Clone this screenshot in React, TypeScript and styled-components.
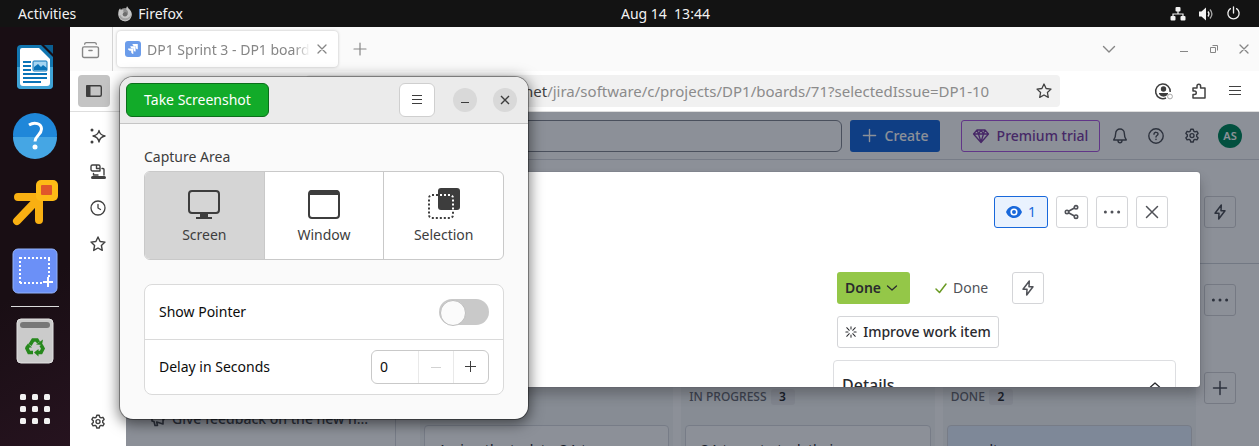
import React from "react";
import styled, { createGlobalStyle, css } from "styled-components";

const Global = createGlobalStyle`
  * { box-sizing: border-box; }
  body { margin: 0; font-family: "Noto Sans", "Open Sans", sans-serif; font-size: 14px; }
  button, input { font: inherit; color: inherit; margin: 0; padding: 0; }
  button { background: none; border: 0; cursor: pointer; white-space: nowrap; }
  svg { display: block; flex: none; overflow: visible; }
`;

/* ---------- desktop shell ---------- */

const Desktop = styled.div`
  position: relative;
  display: flex;
  flex-direction: column;
  height: 100vh;
  overflow: hidden;
  background: #1b0f16;
`;

const TopBar = styled.header`
  display: grid;
  grid-template-columns: 604fr auto 532fr;
  align-items: center;
  flex: none;
  height: 27px;
  padding: 0 18px;
  background: #131313;
  color: #f2f2f2;
  line-height: 20px;
`;

const TopGroup = styled.div<{ $end?: boolean; $gap: number }>`
  display: flex;
  align-items: center;
  justify-content: ${(p) => (p.$end ? "flex-end" : "flex-start")};
  gap: ${(p) => p.$gap}px;
`;

const TopButton = styled.button`
  display: flex;
  align-items: center;
  gap: 5px;
`;

const Clock = styled.time`
  white-space: pre;
`;

const Body = styled.div`
  display: flex;
  flex: 1;
  min-height: 0;
`;

const Dock = styled.nav`
  display: flex;
  flex-direction: column;
  align-items: center;
  flex: none;
  width: 70px;
  padding-top: 6px;
  background: linear-gradient(150deg, #190e14 60%, #26131f);
`;

const DockItem = styled.button`
  display: grid;
  place-items: center;
  flex: none;
  width: 70px;
  height: 68px;
`;

const DockRule = styled.hr`
  flex: none;
  width: 48px;
  height: 1px;
  margin: 1px 0 0;
  border: 0;
  background: #dcdcdc;
`;

/* ---------- browser ---------- */

const Browser = styled.main`
  display: flex;
  flex-direction: column;
  flex: 1;
  min-width: 0;
  background: #fff;
  color: #414141;
`;

const IconButton = styled.button<{ $w?: number; $active?: boolean }>`
  display: grid;
  place-items: center;
  flex: none;
  width: ${(p) => p.$w ?? 32}px;
  height: 32px;
  border-radius: 4px;
  background: ${(p) => (p.$active ? "#c4c4c4" : "none")};
`;

const TabBar = styled.div`
  display: flex;
  align-items: center;
  flex: none;
  height: 44px;
  background: #fafafa;
  color: #868686;
`;

const TabListCell = styled.div`
  display: flex;
  justify-content: center;
  align-items: center;
  width: 43px;
  height: 44px;
  padding-right: 2px;
  border-right: 1px solid #d4d4d4;
`;

const Tab = styled.div`
  display: flex;
  align-items: center;
  width: 221px;
  height: 36px;
  margin: 0 6px 0 4px;
  padding: 0 4px 0 8px;
  border-radius: 4px;
  background: #fff;
  box-shadow: 0 0 3px rgba(0, 0, 0, 0.25);
`;

const TabTitle = styled.span`
  flex: 1;
  overflow: hidden;
  margin-left: 6px;
  white-space: nowrap;
  mask-image: linear-gradient(to left, transparent, #000 16px);
`;

const TabClose = styled(IconButton)`
  width: 24px;
`;

const WindowControls = styled.div`
  display: flex;
  align-items: center;
  margin-left: auto;
`;

const AllTabsButton = styled(IconButton)`
  margin-right: 44px;
`;

const Toolbar = styled.div`
  display: flex;
  align-items: center;
  flex: none;
  height: 41px;
  padding: 0 8px;
  border-bottom: 1px solid #dedede;
`;

const UrlBar = styled.form`
  display: flex;
  align-items: center;
  flex: 1;
  height: 32px;
  margin: 0 87px 0 196px;
  padding-left: 218px;
  border-radius: 4px;
  background: #f1f1f1;
  font-size: 15px;
`;

const UrlInput = styled.input`
  flex: 1;
  min-width: 0;
  border: 0;
  outline: 0;
  background: none;
  color: #8b8b8b;
`;

const ToolbarActions = styled.div`
  display: flex;
  gap: 4px;
`;

const BrowserBody = styled.div`
  display: flex;
  flex: 1;
  min-height: 0;
`;

const SideStrip = styled.nav`
  display: flex;
  flex-direction: column;
  flex: none;
  width: 56px;
  padding: 8px 12px;
  gap: 4px;
`;

const Spacer = styled.div`
  flex: 1;
`;

/* ---------- board page ---------- */

const Page = styled.section`
  position: relative;
  display: flex;
  flex-direction: column;
  flex: 1;
  min-width: 0;
  overflow: hidden;
  background: #fff;
  color: #292a2e;
  line-height: 20px;
`;

const PageHeader = styled.header`
  display: flex;
  align-items: center;
  flex: none;
  height: 48px;
  padding-right: 17px;
  border-bottom: 1px solid #d9dbdf;
  color: #505258;
`;

const SearchBox = styled.input`
  flex: 1;
  height: 32px;
  margin: 0 8px 0 160px;
  border: 1px solid #858993;
  border-radius: 6px;
  background: none;
`;

const HeaderButton = styled.button<{ $primary?: boolean }>`
  display: flex;
  align-items: center;
  justify-content: center;
  gap: 8px;
  flex: none;
  width: ${(p) => (p.$primary ? 90 : 139)}px;
  height: 32px;
  border-radius: 3px;
  font-weight: 500;
  ${(p) =>
    p.$primary
      ? css`
          margin-right: 21px;
          background: #1868db;
          color: #fff;
        `
      : css`
          margin-right: 2px;
          border: 1px solid #af59e1;
          color: #803fa5;
        `}
`;

const Avatar = styled.span`
  display: grid;
  place-items: center;
  width: 24px;
  height: 24px;
  margin-left: 8px;
  border-radius: 50%;
  background: #008a5c;
  color: #fff;
  font-size: 11px;
  font-weight: 600;
`;

const HeaderIcon = styled(IconButton)`
  width: 36px;
`;

const PageBody = styled.div`
  display: flex;
  flex: 1;
  min-height: 0;
`;

const PageNav = styled.nav`
  display: flex;
  flex-direction: column;
  justify-content: flex-end;
  flex: none;
  width: 270px;
  padding: 0 24px 17px;
  border-right: 1px solid #d9dbdf;
`;

const FeedbackLink = styled.a`
  display: flex;
  align-items: center;
  gap: 6px;
  color: #505258;
  font-weight: 500;
  text-decoration: none;
  white-space: nowrap;
`;

const BoardArea = styled.div`
  display: flex;
  flex-direction: column;
  flex: 1;
  min-width: 0;
`;

const BoardBar = styled.div<{ $tall?: boolean }>`
  display: flex;
  justify-content: flex-end;
  flex: none;
  height: ${(p) => (p.$tall ? 104 : 108)}px;
  padding: ${(p) => (p.$tall ? 36 : 20)}px 23px 0;
  border-bottom: ${(p) => (p.$tall ? "1px solid #d0d3d8" : "0")};
`;

const OutlineButton = styled.button<{ $w?: number; $selected?: boolean }>`
  display: flex;
  align-items: center;
  justify-content: center;
  gap: 6px;
  flex: none;
  width: ${(p) => p.$w ?? 32}px;
  height: 32px;
  border: 1px solid ${(p) => (p.$selected ? "#1868db" : "#d4d5d8")};
  border-radius: 3px;
  background: ${(p) => (p.$selected ? "#e9f2fe" : "none")};
  color: ${(p) => (p.$selected ? "#1868db" : "#505258")};
`;

const Columns = styled.div`
  display: flex;
  flex: 1;
  gap: 8px;
  min-height: 0;
  padding: 0 23px 0 24px;
`;

const Column = styled.section`
  flex: 1;
  min-width: 0;
  padding: 14px 4px 0;
  background: #f6f7f8;
`;

const ColumnTitle = styled.h3`
  display: flex;
  align-items: center;
  gap: 4px;
  height: 21px;
  margin: 0 0 18px;
  padding-left: 4px;
  color: #6b6e76;
  font-size: 12px;
  font-weight: 500;
`;

const Count = styled.span`
  width: 24px;
  border-radius: 3px;
  background: #eaebec;
  color: #292a2e;
  font-weight: 600;
  line-height: 16px;
  text-align: center;
`;

const Card = styled.article<{ $selected?: boolean }>`
  height: 90px;
  padding: 14px 13px;
  border: 1px solid #d9dbdf;
  border-radius: 4px;
  background: ${(p) => (p.$selected ? "#e6f0ff" : "#fff")};
`;

const Blanket = styled.div`
  position: absolute;
  inset: 0;
  background: rgba(5, 12, 31, 0.46);
`;

const IssueDialog = styled.section`
  position: absolute;
  inset: 60px 59px 59px;
  display: flex;
  flex-direction: column;
  align-items: flex-end;
  overflow: hidden;
  padding: 24px 24px 0;
  border-radius: 3px;
  background: #fff;
  box-shadow: 0 8px 12px rgba(30, 31, 33, 0.3), 0 0 1px rgba(30, 31, 33, 0.6);
`;

const IssueActions = styled.div`
  display: flex;
  gap: 8px;
  margin: 0 8px 44px 0;
`;

const IssueSide = styled.div`
  display: flex;
  flex-direction: column;
  gap: 12px;
  width: 343px;
`;

const StatusRow = styled.div`
  display: flex;
  align-items: center;
  padding-left: 4px;
`;

const StatusButton = styled.button`
  display: flex;
  align-items: center;
  justify-content: space-between;
  width: 73px;
  height: 32px;
  margin-right: 25px;
  padding: 0 12px 0 8px;
  border-radius: 3px;
  background: #94c748;
  color: #292a2e;
  font-weight: 600;
`;

const Resolution = styled.span`
  display: flex;
  align-items: center;
  gap: 6px;
  width: 77px;
  color: #505258;
`;

const DoneMark = styled.span`
  color: #6a9a23;
`;

const ImproveButton = styled(OutlineButton)`
  margin-left: 4px;
  color: #292a2e;
  font-weight: 500;
`;

const Details = styled.section`
  display: flex;
  justify-content: space-between;
  align-items: center;
  flex: none;
  height: 50px;
  padding: 0 14px 0 8px;
  border: 1px solid #dddee1;
  border-radius: 4px;
`;

const DetailsTitle = styled.h2`
  margin: 0;
  font-size: 16px;
  font-weight: 500;
`;

/* ---------- screenshot tool ---------- */

const ToolWindow = styled.section`
  position: absolute;
  top: 77px;
  left: 120px;
  width: 408px;
  overflow: hidden;
  border-radius: 13px;
  background: #fafafa;
  color: #3d3d3d;
  line-height: 20px;
  box-shadow: 0 0 0 1px rgba(0, 0, 0, 0.35), 0 3px 14px 2px rgba(0, 0, 0, 0.5);
`;

const ToolHeader = styled.header`
  display: flex;
  align-items: center;
  height: 47px;
  padding: 0 11px 0 6px;
  border-bottom: 1px solid #c5c5c5;
  background: #ebebeb;
`;

const TakeButton = styled.button`
  width: 143px;
  height: 34px;
  margin-right: auto;
  border: 1px solid #0b6e1a;
  border-radius: 6px;
  background: #12ab29;
  color: #fff;
`;

const MenuButton = styled.button`
  display: grid;
  place-items: center;
  width: 36px;
  height: 34px;
  margin-right: 18px;
  border: 1px solid #cfcfcf;
  border-radius: 6px;
  background: #fff;
`;

const RoundButton = styled.button`
  display: grid;
  place-items: center;
  width: 24px;
  height: 24px;
  border-radius: 50%;
  background: #d9d9d9;
  & + & { margin-left: 16px; }
`;

const ToolBody = styled.div`
  padding: 23px 24px 24px;
`;

const AreaGroup = styled.fieldset`
  min-width: 0;
  margin: 0 0 24px;
  padding: 0;
  border: 0;
`;

const AreaLegend = styled.legend`
  padding: 0 0 4px;
`;

const AreaOptions = styled.div`
  display: flex;
  overflow: hidden;
  height: 89px;
  border: 1px solid #c9c9c9;
  border-radius: 6px;
  background: #fff;
`;

const HiddenInput = styled.input`
  position: absolute;
  opacity: 0;
  pointer-events: none;
`;

const AreaOption = styled.label`
  display: flex;
  flex: 1;
  flex-direction: column;
  align-items: center;
  justify-content: center;
  gap: 4px;
  padding-top: 2px;
  & + & { border-left: 1px solid #c9c9c9; }
  &:has(input:checked) { background: #d5d5d5; }
`;

const SettingsList = styled.div`
  border: 1px solid #dadada;
  border-radius: 8px;
  background: #fff;
  color: #0c0c0c;
`;

const Setting = styled.div`
  display: flex;
  align-items: center;
  justify-content: space-between;
  height: 54px;
  padding: 0 14px;
  & + & { height: 55px; border-top: 1px solid #dadada; }
`;

const Switch = styled.input`
  appearance: none;
  display: flex;
  width: 50px;
  height: 26px;
  padding: 1px;
  border-radius: 13px;
  background: #c9c9c9;
  &::before {
    content: "";
    width: 24px;
    height: 24px;
    border: 1px solid #bebebe;
    border-radius: 50%;
    background: #fbfbfb;
  }
  &:checked { justify-content: flex-end; background: #12ab29; }
`;

const Spin = styled.div`
  display: flex;
  overflow: hidden;
  width: 118px;
  height: 34px;
  border: 1px solid #c9c9c9;
  border-radius: 6px;
`;

const SpinInput = styled.input`
  flex: 1;
  min-width: 0;
  padding-left: 8px;
  border: 0;
  outline: 0;
  background: none;
`;

const SpinButton = styled.button`
  display: grid;
  place-items: center;
  width: 35px;
  border-left: 1px solid #e9e9e9;
  color: #3d3d3d;
  &:disabled { color: #d2d2d2; }
`;

/* ---------- icons ---------- */

type LineProps = { d: string; size?: number; box?: number; w?: number; round?: boolean; children?: React.ReactNode };

const Line = ({ d, size = 16, box = 16, w = 1.3, round = true, children }: LineProps) => (
  <svg width={size} height={size} viewBox={`0 0 ${box} ${box}`} fill="none" stroke="currentColor" strokeWidth={w}
    strokeLinecap={round ? "round" : "butt"} strokeLinejoin={round ? "round" : "miter"} aria-hidden>
    <path d={d} />
    {children}
  </svg>
);

const STAR = "M8 1l2.1 4.5 4.9.6-3.6 3.4.9 4.9L8 12l-4.3 2.4.9-4.9L1 6.1l4.9-.6z";
const BOLT = "M9.3 1L3 9.2h4L6.7 15 13 6.8H9z";
const GEAR =
  "M6.8 1.2h2.4l.5 1.9 1.3.8 1.9-.6 1.2 2.1-1.4 1.4v1.6l1.4 1.4-1.2 2.1-1.9-.6-1.3.8-.5 1.9H6.8l-.5-1.9-1.3-.8-1.9.6-1.2-2.1 1.4-1.4V6.8L1.9 5.4l1.2-2.1 1.9.6 1.3-.8z";
const CROSS_SMALL = "M4 4l8 8M12 4l-8 8";

const Gear = () => (
  <Line d={GEAR} w={1.4}><circle cx="8" cy="7.6" r="2" /></Line>
);

const Dots = () => (
  <svg width="18" height="4" viewBox="0 0 18 4" fill="currentColor" aria-hidden>
    <circle cx="2.4" cy="2" r="1.5" /><circle cx="9" cy="2" r="1.5" /><circle cx="15.6" cy="2" r="1.5" />
  </svg>
);

const FirefoxIcon = () => (
  <svg width="16" height="16" viewBox="0 0 16 16" aria-hidden>
    <circle cx="8" cy="8.6" r="6.6" fill="#8d8d8d" />
    <path d="M1.4 8.6C1 5.500 2 3.300 3.200 2.300c.1 1 .5 1.500 1 1.900C5 3.600 6.300 3.600 7 4c-.6.4-1.300.8-1.200 1.600l2 .4c-.1 1-1.800 1.100-2 2.100 0 2 3.500 2.400 5 .2 1-2-.2-4-1.600-4.900 0-1.300.3-2.400 1-3.100.5 2.300 4.600 3.700 4.500 8.100-.2 4-3.200 6.800-6.800 6.800s-6.300-2.800-6.500-6.600z" fill="#c6c6c6" />
    <path d="M2 10c1 3 3.400 4.600 6.400 4.400 3-.2 5.500-2.400 5.700-5.600-1.400 2.600-3.500 3.600-6 3.400C5.500 12 4 11 3.500 9z" fill="#a4a4a4" />
    <circle cx="8" cy="8.200" r="2.200" fill="#6d6d6d" />
  </svg>
);

const NetworkIcon = () => (
  <svg width="16" height="14" viewBox="0 0 16 14" fill="#f2f2f2" aria-hidden>
    <rect x="5.500" y="0" width="5" height="4.500" rx="1" />
    <rect x="0.500" y="9" width="5" height="4.500" rx="1" />
    <rect x="10.500" y="9" width="5" height="4.500" rx="1" />
    <path d="M8 4v3M3 9V7h10v2" fill="none" stroke="#f2f2f2" strokeWidth="1.200" />
  </svg>
);

const VolumeIcon = () => (
  <svg width="16" height="16" viewBox="0 0 16 16" aria-hidden>
    <path d="M1 5.500h2.500L8 1.500v13L3.500 10.500H1z" fill="#f2f2f2" />
    <path d="M10 5.500q2 2.500 0 5" fill="none" stroke="#f2f2f2" strokeWidth="1.300" />
    <path d="M12 3.500q3.800 4.500 0 9" fill="none" stroke="#a8a8a8" strokeWidth="1.300" />
  </svg>
);

const WriterIcon = () => (
  <svg width="38" height="46" viewBox="0 0 38 46" aria-hidden>
    <path d="M5 1h20l12 12v28a4 4 0 0 1-4 4H5a4 4 0 0 1-4-4V5a4 4 0 0 1 4-4z" fill="#1276b0" />
    <path d="M1 23h36v18a4 4 0 0 1-4 4H5a4 4 0 0 1-4-4z" fill="#3fa3d6" />
    <path d="M28 1h9v9z" fill="#0b5f92" />
    <path d="M6 4h17l11 11v24a3 3 0 0 1-3 3H7a3 3 0 0 1-3-3V6a2 2 0 0 1 2-2z" fill="#fff" />
    <path d="M7 18h8M7 22h8M7 26h8M7 30h24M7 34h24M7 38h18" stroke="#0b74b8" strokeWidth="2" />
    <rect x="17" y="17" width="14" height="10" rx="1" fill="#a5d5f2" stroke="#0b74b8" />
    <path d="M18 26v-3l4-3 3 3 2-2 4 3v2z" fill="#0b74b8" />
  </svg>
);

const HelpDockIcon = () => (
  <svg width="46" height="46" viewBox="0 0 46 46" aria-hidden>
    <circle cx="23" cy="23" r="22" fill="#1f87d9" />
    <path d="M1 25h44a22 22 0 0 1-44 0z" fill="#45a6e4" />
    <path d="M17 13c5.500-3.500 12.500-1.500 12.500 4 0 6-6.500 6.500-6.500 12.500" fill="none" stroke="#fff" strokeWidth="3" />
    <circle cx="23" cy="35" r="2.500" fill="#fff" />
  </svg>
);

const ArrowDockIcon = () => (
  <svg width="48" height="48" viewBox="0 0 48 48" aria-hidden>
    <path d="M27 20L6 42M28 18H7M28 18v23" stroke="#f9b012" strokeWidth="8" strokeLinecap="round" fill="none" />
    <rect x="25" y="1" width="22" height="21" rx="5" fill="#fdbb16" />
    <rect x="30" y="6" width="11" height="10" rx="1" fill="#e0572a" />
  </svg>
);

const ShotDockIcon = () => (
  <svg width="46" height="46" viewBox="0 0 46 46" aria-hidden>
    <rect x="1" y="1" width="44" height="44" rx="5" fill="#6b90f7" stroke="#93b3fb" />
    <path d="M8 10h30M37 11v18M8 9v27M8 35h24" fill="none" stroke="#fff" strokeWidth="2" strokeDasharray="2 2" />
    <path d="M36 29v10M31 34h10" stroke="#fff" strokeWidth="2" />
  </svg>
);

const TrashIcon = () => (
  <svg width="38" height="46" viewBox="0 0 38 46" aria-hidden>
    <rect x="1" y="1" width="36" height="44" rx="4" fill="#cbcbcb" stroke="#e2e2e2" />
    <rect x="4" y="4" width="30" height="6" rx="3" fill="#777" />
    <g fill="none" stroke="#26881c" strokeWidth="3.600">
      <path d="M14 27l3-5h4l1.500 2.500" />
      <path d="M25 27l2 3.500-2 4h-3" />
      <path d="M17 34.500h-4l-2-4 1-2" />
    </g>
    <path d="M20 26.500l6 .5 1-5.500zM22.500 31v7.500L18 34.500zM9 29.500l3-4 4 4z" fill="#26881c" />
  </svg>
);

const AppsIcon = () => (
  <svg width="30" height="30" viewBox="0 0 30 30" fill="#f2f2f2" aria-hidden>
    {[0, 12, 24].map((y) => [0, 12, 24].map((x) => <rect key={`${x}-${y}`} x={x} y={y} width="6" height="6" rx="1.500" />))}
  </svg>
);

const FaviconIcon = () => (
  <svg width="16" height="16" viewBox="0 0 16 16" aria-hidden>
    <rect width="16" height="16" rx="3" fill="#6b9cea" />
    <path d="M7.500 3h5.300v5.300c-1.300 0-2-.9-2-2.100v-1h-1c-1.300 0-2.300-.9-2.300-2.200z" fill="#fff" />
    <path d="M5.300 5.300h5.300v5.200c-1.300 0-2.100-.9-2.100-2.100v-1h-1c-1.200 0-2.200-.9-2.200-2.100z" fill="#fff" />
    <path d="M3 7.500h5.300v5.400c-1.300 0-2.100-.9-2.100-2.200v-1H5.100C3.900 9.700 3 8.800 3 7.500z" fill="#fff" />
  </svg>
);

const ScreenIcon = () => (
  <svg width="32" height="32" viewBox="0 0 32 32" aria-hidden>
    <rect x="1" y="2" width="30" height="22" rx="3" fill="none" stroke="#3d3d3d" strokeWidth="2" />
    <path d="M12 24h8v4h4v2H8v-2h4z" fill="#3d3d3d" />
  </svg>
);

const WindowIcon = () => (
  <svg width="32" height="32" viewBox="0 0 32 32" aria-hidden>
    <rect x="1" y="2" width="30" height="27" rx="3" fill="none" stroke="#3d3d3d" strokeWidth="2" />
    <path d="M1 6V4a3 3 0 0 1 3-3h24a3 3 0 0 1 3 3v2z" fill="#3d3d3d" />
  </svg>
);

const SelectionIcon = () => (
  <svg width="32" height="32" viewBox="0 0 32 32" aria-hidden>
    <rect x="10" y="-1" width="22" height="22" rx="3" fill="#3d3d3d" />
    <path d="M10 6H4a3 3 0 0 0-3 3v17a3 3 0 0 0 3 3h18a3 3 0 0 0 3-3v-5" fill="none" stroke="#3d3d3d" strokeWidth="2" strokeDasharray="2 2" />
    <path d="M12 6h10a3 3 0 0 1 3 3v12" fill="none" stroke="#fff" strokeWidth="2" strokeDasharray="2 2" />
  </svg>
);

/* ---------- page data ---------- */

const areas = [
  { name: "Screen", icon: <ScreenIcon /> },
  { name: "Window", icon: <WindowIcon /> },
  { name: "Selection", icon: <SelectionIcon /> },
];

const columns = [
  { title: "", count: "", card: "Assign the task to QA t" },
  { title: "IN PROGRESS", count: "3", card: "QA team to task their" },
  { title: "DONE", count: "2", card: "result", selected: true },
];

const TopPanel = () => (
  <TopBar>
    <TopGroup $gap={41}>
      <TopButton>Activities</TopButton>
      <TopButton><FirefoxIcon />Firefox</TopButton>
    </TopGroup>
    <Clock>Aug 14  13:44</Clock>
    <TopGroup $end $gap={12}>
      <NetworkIcon />
      <VolumeIcon />
      <Line d="M8 1v6.500M4.700 2.800a6 6 0 1 0 6.600 0" w={1.4} size={15} />
    </TopGroup>
  </TopBar>
);

const AppDock = () => (
  <Dock aria-label="Dock">
    <DockItem aria-label="Writer"><WriterIcon /></DockItem>
    <DockItem aria-label="Help"><HelpDockIcon /></DockItem>
    <DockItem aria-label="Launcher"><ArrowDockIcon /></DockItem>
    <DockItem aria-label="Screenshot"><ShotDockIcon /></DockItem>
    <DockRule />
    <DockItem aria-label="Trash"><TrashIcon /></DockItem>
    <DockItem aria-label="Applications"><AppsIcon /></DockItem>
  </Dock>
);

const BrowserTop = () => (
  <>
    <TabBar>
      <TabListCell>
        <IconButton aria-label="List tabs">
          <Line d="M2 5.500h12a1.500 1.500 0 0 1 1.500 1.500v7a1.500 1.500 0 0 1-1.500 1.500H2A1.500 1.500 0 0 1 .5 14V7A1.500 1.500 0 0 1 2 5.500zM2.500 3q.2-1.500 1.500-1.500h8q1.300 0 1.500 1.500M6.500 9h3" size={17} />
        </IconButton>
      </TabListCell>
      <Tab>
        <FaviconIcon />
        <TabTitle>DP1 Sprint 3 - DP1 board</TabTitle>
        <TabClose aria-label="Close tab"><Line d={CROSS_SMALL} /></TabClose>
      </Tab>
      <IconButton aria-label="New tab"><Line d="M8 2v12M2 8h12" w={1.2} /></IconButton>
      <WindowControls>
        <AllTabsButton aria-label="All tabs"><Line d="M2.500 5.500L8 11l5.500-5.500" w={1.4} /></AllTabsButton>
        <IconButton $w={30} aria-label="Minimize"><Line d="M4 10.500h8" w={1} round={false} /></IconButton>
        <IconButton $w={30} aria-label="Restore"><Line d="M4.500 6.500h5v5h-5zM6.500 4.500h5v5" w={1} round={false} /></IconButton>
        <IconButton $w={30} aria-label="Close window"><Line d={CROSS_SMALL} /></IconButton>
      </WindowControls>
    </TabBar>
    <Toolbar>
      <IconButton $active aria-label="Toggle sidebar">
        <svg width="16" height="12" viewBox="0 0 16 12" aria-hidden>
          <rect x="0.700" y="0.700" width="14.600" height="10.600" rx="1.500" fill="none" stroke="#3d3d3d" strokeWidth="1.400" />
          <rect x="0" y="0" width="4.500" height="12" rx="1" fill="#3d3d3d" />
        </svg>
      </IconButton>
      <UrlBar>
        <span>net</span>
        <UrlInput aria-label="Address" defaultValue="/jira/software/c/projects/DP1/boards/71?selectedIssue=DP1-10" />
        <IconButton type="button" aria-label="Bookmark"><Line d={STAR} /></IconButton>
      </UrlBar>
      <ToolbarActions>
        <IconButton aria-label="Account">
          <svg width="20" height="18" viewBox="0 0 20 18" aria-hidden>
            <path d="M17.200 10A7.300 7.300 0 1 0 13 16" fill="none" stroke="#3d3d3d" strokeWidth="1.500" />
            <circle cx="10.500" cy="7" r="2.700" fill="#3d3d3d" />
            <path d="M6 11h9v1q-1.500 2.700-4.500 2.700T6 12z" fill="#3d3d3d" />
            <circle cx="17" cy="14.500" r="2.400" fill="#fff" stroke="#a8a8a8" />
          </svg>
        </IconButton>
        <IconButton aria-label="Extensions">
          <Line d="M2 15V11.500h1.500a1.700 1.700 0 0 0 0-3.500H2V5h4V3a1.800 1.800 0 0 1 3.600 0v2H14v10z" w={1.5} />
        </IconButton>
        <IconButton aria-label="Menu"><Line d="M2 3.500h12M2 7.500h12M2 11.500h12" w={1} round={false} /></IconButton>
      </ToolbarActions>
    </Toolbar>
  </>
);

const SideTools = () => (
  <SideStrip aria-label="Sidebar tools">
    <IconButton aria-label="Assistant">
      <Line d="M9 2.500q.8 4.500 6 5.500-5.200 1-6 6-.8-5-6-6 5.200-1 6-5.500z" w={1.4}>
        <circle cx="2" cy="2" r="0.800" fill="currentColor" /><circle cx="2" cy="14" r="0.800" fill="currentColor" />
      </Line>
    </IconButton>
    <IconButton aria-label="Synced devices">
      <Line d="M2.500 1h6A1.500 1.500 0 0 1 10 2.500V7H2.500A1.500 1.500 0 0 1 1 5.500v-3A1.500 1.500 0 0 1 2.500 1zM6.500 1v3.500H10M12 4.500h1a1 1 0 0 1 1 1V11M3.500 9.500V11H8" w={1.4}>
        <path d="M2.500 13.500h12" strokeWidth="3" />
      </Line>
    </IconButton>
    <IconButton aria-label="History">
      <Line d="M8 4.500V8l2.500 1.500"><circle cx="8" cy="8" r="7" /></Line>
    </IconButton>
    <IconButton aria-label="Bookmarks"><Line d={STAR} w={1.4} /></IconButton>
    <Spacer />
    <IconButton aria-label="Settings"><Gear /></IconButton>
  </SideStrip>
);

const Board = () => (
  <>
    <PageHeader>
      <SearchBox aria-label="Search" />
      <HeaderButton $primary><Line d="M8 1.500v13M1.500 8h13" w={1.5} size={15} />Create</HeaderButton>
      <HeaderButton>
        <Line d="M4 2h8l3.500 4L8 14.500.5 6zM.5 6h15M5.500 6L8 14M10.500 6L8 14M4 2l1.500 4L8 2l2.500 4L12 2" w={1.3} />
        Premium trial
      </HeaderButton>
      <HeaderIcon aria-label="Notifications">
        <Line d="M8 1a4.300 4.300 0 0 1 4.300 4.300c0 3.500.7 4.700 2 6.700H1.700c1.300-2 2-3.200 2-6.700A4.300 4.300 0 0 1 8 1zM6 12.500a2 2.300 0 0 0 4 0" w={1.4} />
      </HeaderIcon>
      <HeaderIcon aria-label="Help">
        <Line d="M6 6.200C6 3.600 10.200 3.800 10 6.200 9.800 7.600 8 7.500 8 9M8 11.300v.2" w={1.4}><circle cx="8" cy="8" r="7.200" /></Line>
      </HeaderIcon>
      <HeaderIcon aria-label="Settings"><Gear /></HeaderIcon>
      <Avatar>AS</Avatar>
    </PageHeader>
    <PageBody>
      <PageNav>
        <FeedbackLink href="#feedback">
          <Line d="M2 6v4l2 .5 1 4h2.500l-.8-3.500L13 13V3L4 6zM13 6.500q2 1.500 0 3" w={1.6} />
          Give feedback on the new n…
        </FeedbackLink>
      </PageNav>
      <BoardArea>
        <BoardBar $tall><OutlineButton aria-label="Automation"><Line d={BOLT} w={1.5} /></OutlineButton></BoardBar>
        <BoardBar><OutlineButton aria-label="More"><Dots /></OutlineButton></BoardBar>
        <Columns>
          {columns.map((c) => (
            <Column key={c.card}>
              <ColumnTitle>{c.title}{c.count && <Count>{c.count}</Count>}</ColumnTitle>
              <Card $selected={c.selected}>{c.card}</Card>
            </Column>
          ))}
          <OutlineButton aria-label="Add column"><Line d="M8 1.500v13M1.500 8h13" w={1.5} /></OutlineButton>
        </Columns>
      </BoardArea>
    </PageBody>
  </>
);

const Issue = () => (
  <IssueDialog role="dialog" aria-label="Work item">
    <IssueActions>
      <OutlineButton $w={54} $selected>
        <svg width="16" height="12" viewBox="0 0 16 12" aria-hidden>
          <path d="M8 0c4 0 6.500 2.500 8 6-1.500 3.500-4 6-8 6S1.500 9.500 0 6C1.500 2.500 4 0 8 0z" fill="#1868db" />
          <circle cx="8" cy="6" r="2.800" fill="#1868db" stroke="#fff" strokeWidth="1.600" />
        </svg>
        1
      </OutlineButton>
      <OutlineButton aria-label="Share">
        <Line d="M4.500 7.200L10 4.200M4.500 8.800l5.500 3" w={1.6}>
          <circle cx="3" cy="8" r="1.700" /><circle cx="12" cy="3.300" r="1.700" /><circle cx="12" cy="12.700" r="1.700" />
        </Line>
      </OutlineButton>
      <OutlineButton aria-label="Actions"><Dots /></OutlineButton>
      <OutlineButton aria-label="Close"><Line d="M2.500 2.500l11 11M13.500 2.500l-11 11" w={1.5} /></OutlineButton>
    </IssueActions>
    <IssueSide>
      <StatusRow>
        <StatusButton>Done<Line d="M1.500 4L6 8l4.500-4" box={12} size={12} /></StatusButton>
        <Resolution>
          <DoneMark><Line d="M1 7l3.500 3.500L11 2" box={12} size={12} w={1.5} /></DoneMark>
          Done
        </Resolution>
        <OutlineButton aria-label="Automation"><Line d={BOLT} w={1.5} /></OutlineButton>
      </StatusRow>
      <ImproveButton $w={162}>
        <Line d="M7 1v2.500M7 10.500V13M1 7h2.500M10.500 7H13M2 2l3 3M9 9l3 3M12 2L9 5M5 9l-3 3" box={14} size={12} w={1.2} />
        Improve work item
      </ImproveButton>
      <Details>
        <DetailsTitle>Details</DetailsTitle>
        <Line d="M1.500 8L6 4l4.500 4" box={12} size={12} />
      </Details>
    </IssueSide>
  </IssueDialog>
);

const ScreenshotTool = () => (
  <ToolWindow role="dialog" aria-label="Screenshot">
    <ToolHeader>
      <TakeButton>Take Screenshot</TakeButton>
      <MenuButton aria-label="Menu"><Line d="M3 3.500h10M3 7.500h10M3 11.500h10" round={false} w={1} /></MenuButton>
      <RoundButton aria-label="Minimize"><Line d="M4 10.500h8" round={false} w={1} /></RoundButton>
      <RoundButton aria-label="Close"><Line d={CROSS_SMALL} round={false} w={1.4} /></RoundButton>
    </ToolHeader>
    <ToolBody>
      <AreaGroup>
        <AreaLegend>Capture Area</AreaLegend>
        <AreaOptions>
          {areas.map((a, i) => (
            <AreaOption key={a.name}>
              <HiddenInput type="radio" name="area" defaultChecked={i === 0} />
              {a.icon}
              {a.name}
            </AreaOption>
          ))}
        </AreaOptions>
      </AreaGroup>
      <SettingsList>
        <Setting>
          <label htmlFor="pointer">Show Pointer</label>
          <Switch id="pointer" type="checkbox" role="switch" />
        </Setting>
        <Setting>
          <label htmlFor="delay">Delay in Seconds</label>
          <Spin>
            <SpinInput id="delay" defaultValue="0" inputMode="numeric" />
            <SpinButton disabled aria-label="Decrease"><Line d="M3 8.500h10" w={1} round={false} /></SpinButton>
            <SpinButton aria-label="Increase"><Line d="M7.500 2v11M2 7.500h11" w={1} round={false} /></SpinButton>
          </Spin>
        </Setting>
      </SettingsList>
    </ToolBody>
  </ToolWindow>
);

export default function App() {
  return (
    <Desktop>
      <Global />
      <TopPanel />
      <Body>
        <AppDock />
        <Browser>
          <BrowserTop />
          <BrowserBody>
            <SideTools />
            <Page>
              <Board />
              <Blanket />
              <Issue />
            </Page>
          </BrowserBody>
        </Browser>
      </Body>
      <ScreenshotTool />
    </Desktop>
  );
}
